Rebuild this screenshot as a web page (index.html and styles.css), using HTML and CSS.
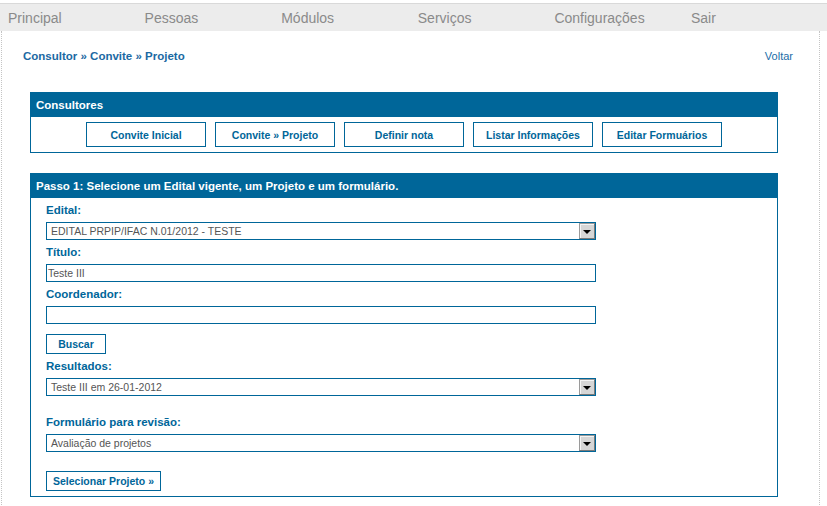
FILE: index.html
```html
<!DOCTYPE html>
<html lang="pt">
<head>
<meta charset="utf-8">
<title>Consultor » Convite » Projeto</title>
<link rel="stylesheet" href="styles.css">
</head>
<body>
<nav class="topbar">
  <a class="nav-item">Principal</a>
  <a class="nav-item">Pessoas</a>
  <a class="nav-item">Módulos</a>
  <a class="nav-item">Serviços</a>
  <a class="nav-item">Configurações</a>
  <a class="nav-item">Sair</a>
</nav>
<div class="page">
  <div class="crumbs">
    <span class="crumb-path">Consultor » Convite » Projeto</span>
    <a class="back">Voltar</a>
  </div>

  <section class="panel">
    <h2 class="panel-head">Consultores</h2>
    <div class="panel-body btn-row">
      <button class="btn btn-wide">Convite Inicial</button>
      <button class="btn btn-wide">Convite » Projeto</button>
      <button class="btn btn-wide">Definir nota</button>
      <button class="btn btn-wide">Listar Informações</button>
      <button class="btn btn-wide">Editar Formuários</button>
    </div>
  </section>

  <section class="panel panel-form">
    <h2 class="panel-head">Passo 1: Selecione um Edital vigente, um Projeto e um formulário.</h2>
    <div class="panel-body form-body">
      <label class="field-label">Edital:</label>
      <div class="select">
        <span class="select-value">EDITAL PRPIP/IFAC N.01/2012 - TESTE</span>
        <span class="select-arrow"><span class="tri"></span></span>
      </div>
      <label class="field-label">Título:</label>
      <div class="input">Teste III</div>
      <label class="field-label">Coordenador:</label>
      <div class="input"></div>
      <button class="btn btn-small btn-search">Buscar</button>
      <label class="field-label">Resultados:</label>
      <div class="select">
        <span class="select-value">Teste III em 26-01-2012</span>
        <span class="select-arrow"><span class="tri"></span></span>
      </div>
      <label class="field-label label-gap">Formulário para revisão:</label>
      <div class="select">
        <span class="select-value">Avaliação de projetos</span>
        <span class="select-arrow"><span class="tri"></span></span>
      </div>
      <button class="btn btn-small btn-submit">Selecionar Projeto »</button>
    </div>
  </section>
</div>
</body>
</html>
```

FILE: styles.css
```css
html, body {
  margin: 0;
  padding: 0;
  background: #ffffff;
  font-family: "Liberation Sans", Arial, sans-serif;
}

.topbar {
  display: flex;
  margin-top: 3px;
  height: 27px;
  border-top: 1px solid #d9d9d9;
  background: #ececec;
}

.nav-item {
  width: 136.6px;
  padding-left: 8px;
  box-sizing: border-box;
  font-size: 14px;
  line-height: 28px;
  color: #8a8a8a;
  text-decoration: none;
}

.page {
  margin-left: 1px;
  width: 817px;
  min-height: 480px;
  border-left: 1px dotted #c4c4c4;
  border-right: 1px dotted #c4c4c4;
}

.crumbs {
  display: flex;
  justify-content: space-between;
  padding: 18px 26px 0 21px;
  font-size: 11.5px;
  line-height: 14px;
}

.crumb-path {
  font-weight: bold;
  color: #1b69a3;
}

.back {
  font-size: 11px;
  color: #1b6da8;
}

.panel {
  margin: 29px 0 0 28px;
  width: 748px;
  box-sizing: border-box;
  border: 1px solid #006699;
}

.panel-form {
  margin-top: 20px;
}

.panel-head {
  margin: 0;
  height: 24px;
  padding-left: 5px;
  background: #006699;
  color: #ffffff;
  font-size: 11.5px;
  line-height: 24px;
  font-weight: bold;
}

.btn-row {
  display: flex;
  justify-content: center;
  gap: 9px;
  padding: 5px 0;
}

.btn {
  box-sizing: border-box;
  border: 1px solid #006699;
  background: #ffffff;
  color: #006699;
  font-family: "Liberation Sans", Arial, sans-serif;
  font-weight: bold;
  padding: 0;
  cursor: pointer;
}

.btn-wide {
  width: 120px;
  height: 25px;
  font-size: 10.5px;
}

.btn-small {
  display: block;
  height: 20px;
  font-size: 10.5px;
}

.btn-search {
  width: 60px;
  margin-top: 10px;
}

.btn-submit {
  width: 115px;
  margin-top: 19px;
}

.form-body {
  display: flex;
  flex-direction: column;
  align-items: flex-start;
  padding: 0 15px 5px 15px;
}

.field-label {
  display: block;
  font-size: 11.5px;
  font-weight: bold;
  line-height: 24px;
  color: #00669a;
}

.label-gap {
  margin-top: 14px;
}

.select,
.input {
  box-sizing: border-box;
  width: 550px;
  height: 18px;
  border: 1px solid #006699;
  font-size: 10.5px;
  line-height: 16px;
  color: #555555;
}

.input {
  padding-left: 1px;
}

.select {
  display: flex;
}

.select-value {
  flex: 1;
  padding-left: 4px;
}

.select-arrow {
  display: flex;
  align-items: center;
  justify-content: center;
  width: 16px;
  height: 16px;
  box-sizing: border-box;
  border: 1px solid #7a7a7a;
  border-top-color: #9a9a9a;
  border-left-color: #9a9a9a;
  background: #d6d6d6;
  box-shadow: inset 1px 1px 0 #f4f4f4;
}

.tri {
  display: block;
  width: 0;
  height: 0;
  margin-top: 2px;
  border-left: 4px solid transparent;
  border-right: 4px solid transparent;
  border-top: 4px solid #000000;
}
```
